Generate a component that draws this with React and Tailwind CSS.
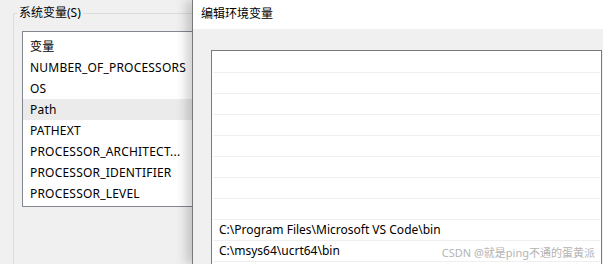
const sysVars = [
    "变量",
    "NUMBER_OF_PROCESSORS",
    "OS",
    "Path",
    "PATHEXT",
    "PROCESSOR_ARCHITECT...",
    "PROCESSOR_IDENTIFIER",
    "PROCESSOR_LEVEL",
];

const pathRows = [
    "", "", "", "", "", "", "", "",
    "C:\\Program Files\\Microsoft VS Code\\bin",
    "C:\\msys64\\ucrt64\\bin",
    "",
];

export default function App() {
    return (
        <div
            className="relative w-[603px] h-[264px] overflow-hidden bg-[#f0f0f0] text-[12px] text-black"
            style={{ fontFamily: '"Noto Sans", "Noto Sans CJK SC", sans-serif' }}
        >
            {/* system variables window behind */}
            <div className="pl-[13px] pt-[13px]">
                <div className="relative border-l border-t border-[#dcdcdc] h-[300px]">
                    <span className="absolute -top-[10px] left-[3px] bg-[#f0f0f0] px-[2px] leading-[18px]">
                        系统变量(S)
                    </span>
                    <div className="ml-[8px] mt-[17px] w-[200px] h-[176px] border border-[#828790] bg-white pt-[4px]">
                        {sysVars.map((name, idx) => (
                            <div
                                key={idx}
                                className={`h-[21px] leading-[21px] pl-[7px] whitespace-nowrap tracking-[0.2px] ${
                                    name === "Path" ? "bg-[#ebebeb]" : ""
                                }`}
                            >
                                {name}
                            </div>
                        ))}
                    </div>
                </div>
            </div>

            {/* edit dialog on top */}
            <div className="absolute left-[192px] top-0 w-[420px] h-[264px] border-l border-[#787878] bg-[#f0f0f0] shadow-[-6px_0_10px_rgba(0,0,0,0.18)] flex flex-col">
                <div className="h-[29px] bg-white pl-[8px] leading-[27px] shrink-0">编辑环境变量</div>
                <div className="pl-[18px] pt-[21px]">
                    <div className="w-[391px] h-[300px] border border-[#7a7a7a] bg-white pt-[1px] px-[1px]">
                        {pathRows.map((row, idx) => (
                            <div
                                key={idx}
                                className="h-[21px] leading-[20px] border-b border-[#efefef] pl-[6px] whitespace-nowrap"
                            >
                                {row}
                            </div>
                        ))}
                    </div>
                </div>
            </div>

            <span className="absolute right-[8px] top-[245px] text-[11px] text-[#b4b4b4] leading-[16px] whitespace-nowrap">
                CSDN @就是ping不通的蛋黄派
            </span>
        </div>
    );
}
